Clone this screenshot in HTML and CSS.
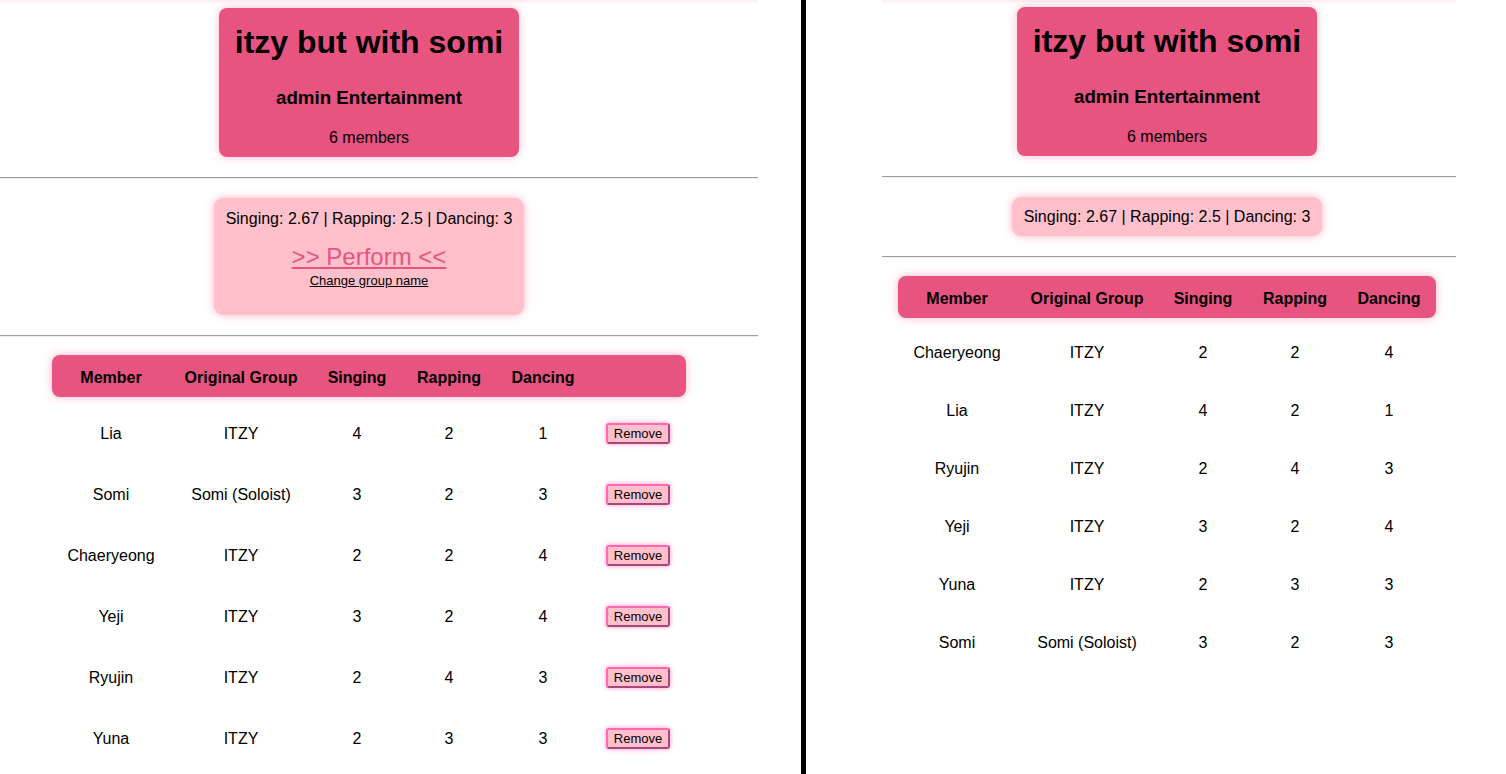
FILE: index.html
```html
<!DOCTYPE html>
<html lang="en">
<head>
<meta charset="utf-8">
<title>itzy but with somi</title>
<link rel="stylesheet" href="styles.css">
</head>
<body>
<main class="view">
  <section class="panel panel-admin">
    <div class="stack">
      <div class="group-card">
        <h1>itzy but with somi</h1>
        <h3>admin Entertainment</h3>
        <p>6 members</p>
      </div>
    </div>
    <hr class="rule">
    <div class="stack">
      <div class="stats-box">
        <div class="stats">Singing: 2.67 | Rapping: 2.5 | Dancing: 3</div>
        <a class="perform" href="#">&gt;&gt; Perform &lt;&lt;</a>
        <a class="rename" href="#">Change group name</a>
      </div>
    </div>
    <hr class="rule rule-low">
    <div class="stack">
      <div class="roster roster-admin">
        <div class="row head">
          <div>Member</div><div>Original Group</div><div>Singing</div><div>Rapping</div><div>Dancing</div><div></div>
        </div>
        <div class="row">
          <div>Lia</div><div>ITZY</div><div>4</div><div>2</div><div>1</div><div class="act"><button class="remove">Remove</button></div>
        </div>
        <div class="row">
          <div>Somi</div><div>Somi (Soloist)</div><div>3</div><div>2</div><div>3</div><div class="act"><button class="remove">Remove</button></div>
        </div>
        <div class="row">
          <div>Chaeryeong</div><div>ITZY</div><div>2</div><div>2</div><div>4</div><div class="act"><button class="remove">Remove</button></div>
        </div>
        <div class="row">
          <div>Yeji</div><div>ITZY</div><div>3</div><div>2</div><div>4</div><div class="act"><button class="remove">Remove</button></div>
        </div>
        <div class="row">
          <div>Ryujin</div><div>ITZY</div><div>2</div><div>4</div><div>3</div><div class="act"><button class="remove">Remove</button></div>
        </div>
        <div class="row">
          <div>Yuna</div><div>ITZY</div><div>2</div><div>3</div><div>3</div><div class="act"><button class="remove">Remove</button></div>
        </div>
      </div>
    </div>
  </section>

  <div class="divider"></div>

  <section class="panel panel-public">
    <div class="stack">
      <div class="group-card">
        <h1>itzy but with somi</h1>
        <h3>admin Entertainment</h3>
        <p>6 members</p>
      </div>
    </div>
    <hr class="rule">
    <div class="stack">
      <div class="stats-box stats-box-short">
        <div class="stats">Singing: 2.67 | Rapping: 2.5 | Dancing: 3</div>
      </div>
    </div>
    <hr class="rule rule-low">
    <div class="stack">
      <div class="roster roster-public">
        <div class="row head">
          <div>Member</div><div>Original Group</div><div>Singing</div><div>Rapping</div><div>Dancing</div>
        </div>
        <div class="row"><div>Chaeryeong</div><div>ITZY</div><div>2</div><div>2</div><div>4</div></div>
        <div class="row"><div>Lia</div><div>ITZY</div><div>4</div><div>2</div><div>1</div></div>
        <div class="row"><div>Ryujin</div><div>ITZY</div><div>2</div><div>4</div><div>3</div></div>
        <div class="row"><div>Yeji</div><div>ITZY</div><div>3</div><div>2</div><div>4</div></div>
        <div class="row"><div>Yuna</div><div>ITZY</div><div>2</div><div>3</div><div>3</div></div>
        <div class="row"><div>Somi</div><div>Somi (Soloist)</div><div>3</div><div>2</div><div>3</div></div>
      </div>
    </div>
  </section>
</main>
</body>
</html>
```

FILE: styles.css
```css
* { box-sizing: border-box; }

html, body {
  margin: 0;
  padding: 0;
  background: #fff;
}

body {
  font-family: "Liberation Sans", Arial, sans-serif;
  color: #000;
  font-size: 16px;
}

.view {
  display: flex;
  height: 774px;
  overflow: hidden;
}

.panel {
  background: linear-gradient(#fcebf0, #ffffff 4px);
}

.panel-admin {
  width: 758px;
  padding-top: 8px;
}

.panel-public {
  width: 574px;
  margin-left: 76px;
  padding-top: 7px;
}

.divider {
  width: 5px;
  height: 774px;
  margin-left: 43px;
  background: #000;
  flex: none;
}

.stack {
  display: flex;
  justify-content: center;
}

.panel-admin .stack { padding-right: 20px; }
.panel-public .stack { padding-right: 4px; }

/* group card */
.group-card {
  width: 300px;
  background: #e75480;
  border-radius: 8px;
  box-shadow: 0 0 9px rgba(240, 110, 150, 0.45);
  text-align: center;
  padding: 16px 10px 10px;
}

.group-card h1 {
  margin: 0 0 26px;
  font-size: 32px;
  line-height: 37px;
  font-weight: bold;
}

.group-card h3 {
  margin: 0 0 20px;
  font-size: 18.72px;
  line-height: 22px;
  font-weight: bold;
}

.group-card p {
  margin: 0;
  font-size: 16px;
  line-height: 18px;
}

/* rules */
.rule {
  height: 0;
  margin: 20px 0 19px;
  border: 0;
  border-top: 1px solid #9e9e9e;
  border-bottom: 1px solid #eeeeee;
}

.rule-low {
  margin: 20px 0 18px;
}

/* stats */
.stats-box {
  background: #ffc0cb;
  border-radius: 9px;
  box-shadow: 0 0 9px rgba(235, 90, 135, 0.45);
  text-align: center;
  padding: 12px 12px 26px;
  display: flex;
  flex-direction: column;
  align-items: center;
}

.stats-box-short {
  padding: 11px 12px 10px;
}

.stats {
  font-size: 16px;
  line-height: 18px;
}

.perform {
  margin-top: 15px;
  font-size: 24px;
  line-height: 28px;
  color: #e75480;
  text-decoration: underline;
}

.rename {
  margin-top: 2px;
  font-size: 13px;
  line-height: 16px;
  color: #000;
  text-decoration: underline;
}

/* roster table */
.roster-admin .row {
  display: grid;
  grid-template-columns: 118px 142px 90px 94px 94px 96px;
}

.roster-public .row {
  display: grid;
  grid-template-columns: 118px 142px 90px 94px 94px;
}

.row > div {
  text-align: center;
  padding: 22px 0 18px;
  line-height: 18px;
  font-size: 16px;
}

.row.head {
  background: #e75480;
  border-radius: 8px;
  box-shadow: 0 0 9px rgba(240, 110, 150, 0.5);
  margin-bottom: 4px;
}

.roster-admin .row.head {
  margin-bottom: 6px;
}

.row.head > div {
  padding: 14px 0 10px;
  font-weight: bold;
}

.row > .act {
  display: flex;
  justify-content: center;
  align-items: center;
  padding: 20px 0;
}

.remove {
  font-family: "Liberation Sans", Arial, sans-serif;
  font-size: 13px;
  line-height: 15px;
  padding: 1px 6px;
  color: #000;
  background: #ffc0cb;
  border: 2px outset #ff69b4;
  border-radius: 3px;
  box-shadow: 0 0 5px rgba(255, 105, 180, 0.7);
}
```
